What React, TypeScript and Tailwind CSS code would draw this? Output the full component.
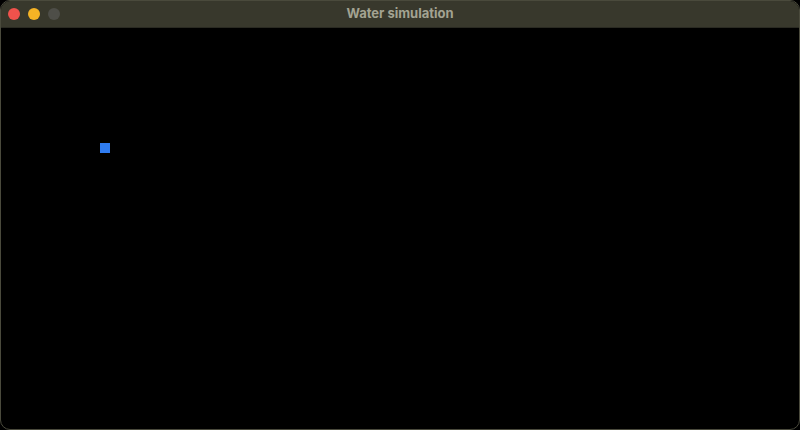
export default function App() {
  return (
    <div className="w-[800px] h-[430px] bg-black overflow-hidden" style={{ fontFamily: 'Inter, "Liberation Sans", sans-serif' }}>
      <div className="w-full h-full flex flex-col rounded-[10px] border border-[#4a4a3c] overflow-hidden bg-black">
        {/* title bar */}
        <div className="relative h-[27px] shrink-0 bg-[#38382c] flex items-center border-b border-[#2a2a22]">
          <div className="flex items-center gap-[8px] pl-[7px]">
            <div className="w-[12px] h-[12px] rounded-full bg-[#f0524c]" />
            <div className="w-[12px] h-[12px] rounded-full bg-[#f5b325]" />
            <div className="w-[12px] h-[12px] rounded-full bg-[#4e4e48]" />
          </div>
          <div className="absolute inset-0 flex items-center justify-center text-[13px] font-bold text-[#a3a392] pointer-events-none">
            Water simulation
          </div>
        </div>
        {/* canvas */}
        <div className="flex-1 pl-[99px] pt-[115px]">
          <div className="w-[10px] h-[10px] bg-[#2f7cf0]" />
        </div>
      </div>
    </div>
  )
}
